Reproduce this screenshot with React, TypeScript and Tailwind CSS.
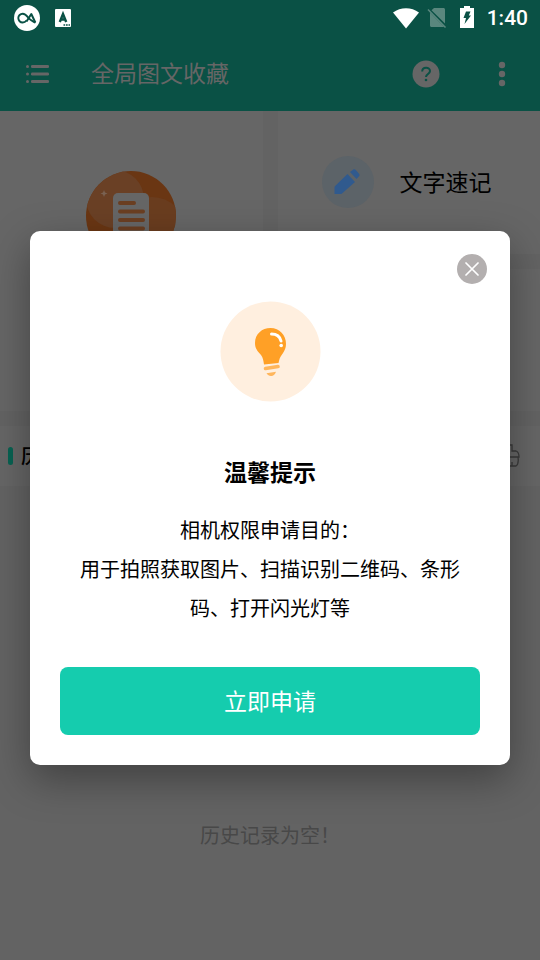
import type { ReactNode } from "react";

function StatusBar() {
  return (
    <div className="flex h-9 items-center justify-between pr-3 pl-3.5 text-white">
      <div className="flex items-center gap-3.5">
        <svg width="27" height="27" viewBox="0 0 27 27" aria-hidden="true">
          <circle cx="13" cy="13" r="13" fill="#fff" />
          <path
            d="M12.500 15.500c-1 1.300-2.300 2-3.800 2a4.400 4.400 0 1 1 0-8.800c3.300 0 4.800 3.300 7 5.500 1.300 1.300 3 2 5.800 3.500"
            fill="none"
            stroke="#0a5145"
            strokeWidth="1.900"
          />
          <path
            d="M12.500 16.500 17.300 9 21.300 17.500"
            fill="none"
            stroke="#0a5145"
            strokeWidth="2"
            strokeLinejoin="round"
          />
        </svg>
        <svg width="16" height="18" viewBox="0 0 16 18" aria-hidden="true">
          <rect width="16" height="18" rx="1" fill="#fff" />
          <path
            d="M4.800 13 8 5 11.200 13M5.800 10.500h4.400"
            fill="none"
            stroke="#0a5145"
            strokeWidth="2.400"
          />
          <path d="M8.500 16h6.500" stroke="#0a5145" strokeWidth="1.500" strokeDasharray="1.700 .8" />
        </svg>
      </div>
      <div className="flex items-center">
        <svg width="26" height="21" viewBox="0 0 26 21" aria-hidden="true">
          <path d="M0 4.500C7.500-1.200 18.500-1.200 26 4.500L13 20.500Z" fill="#fff" />
        </svg>
        <svg className="ml-2" width="20" height="20" viewBox="0 0 20 20" aria-hidden="true">
          <path
            d="M7 0h9.500c.8 0 1.500.7 1.500 1.500v14L4.500 2.200ZM3 4.500 17 18.800c-.3.100-.6.200-1 .200H4.500C3.700 19 3 18.300 3 17.500Z"
            fill="#5a877e"
          />
          <path d="M1 1.500 18.500 19.500" stroke="#5a877e" strokeWidth="1.500" />
        </svg>
        <svg className="ml-3 -mt-0.5" width="16" height="22" viewBox="0 0 16 22" aria-hidden="true">
          <path d="M5 0h6v2h4v20H1V2h4Z" fill="#fff" />
          <path d="M7 5.500h4.500L9.800 9.500H12L5.500 18 7 12H4.500Z" fill="#0a5145" />
        </svg>
        <span className="ml-3 font-[Roboto] text-[21px] leading-6 font-medium">1:40</span>
      </div>
    </div>
  );
}

function Toolbar() {
  return (
    <div className="flex h-[75px] items-center pr-8 pl-[26px] text-[#666]">
      <button aria-label="菜单">
        <svg width="24" height="20" viewBox="0 0 24 20" fill="currentColor" aria-hidden="true">
          <circle cx="1.500" cy="2.500" r="1.500" />
          <circle cx="1.500" cy="10" r="1.500" />
          <circle cx="1.500" cy="17.500" r="1.500" />
          <rect x="5" y="1" width="18" height="3" rx="1.200" />
          <rect x="5" y="8.500" width="18" height="3" rx="1.200" />
          <rect x="5" y="16" width="18" height="3" rx="1.200" />
        </svg>
      </button>
      <h1 className="ml-[41px] flex-1 pb-0.5 text-[23px]">全局图文收藏</h1>
      <button aria-label="帮助">
        <svg width="28" height="28" viewBox="0 0 28 28" aria-hidden="true">
          <circle cx="14" cy="14" r="13.500" fill="currentColor" />
          <path
            d="M10.200 11.500c0-5 7.800-5 7.800-.5 0 3-4 3-4 6"
            fill="none"
            stroke="#0a5145"
            strokeWidth="2"
          />
          <circle cx="14" cy="20" r="1.300" fill="#0a5145" />
        </svg>
      </button>
      <button className="ml-14" aria-label="更多">
        <svg width="12" height="26" viewBox="0 0 12 26" fill="currentColor" aria-hidden="true">
          <circle cx="6" cy="4" r="3.200" />
          <circle cx="6" cy="13" r="3.200" />
          <circle cx="6" cy="22" r="3.200" />
        </svg>
      </button>
    </div>
  );
}

function Card({ className, children }: { className?: string; children?: ReactNode }) {
  return <div className={`bg-[#666] ${className ?? ""}`}>{children}</div>;
}

function Shortcuts() {
  return (
    <div className="flex h-[300px] gap-[15px]">
      <Card className="flex flex-1 justify-center pt-[60px]">
        <svg width="90" height="90" viewBox="0 0 90 90" aria-hidden="true">
          <clipPath id="disc">
            <circle cx="45" cy="45" r="45" />
          </clipPath>
          <g clipPath="url(#disc)">
            <rect width="90" height="90" fill="#6a3613" />
            <circle cx="66" cy="60" r="34" fill="#6a3d1f" />
            <circle cx="29" cy="28" r="29" fill="#6a4025" />
          </g>
          <path d="m18 19 1 2.500 2.500 1-2.500 1-1 2.500-1-2.500-2.500-1 2.500-1Z" fill="#7a6252" />
          <rect x="27" y="22" width="36" height="46" rx="5" fill="#666" />
          <path
            d="M34 32h14M34 40.500h23M34 49h23M34 57.500h23"
            stroke="#6b3f22"
            strokeWidth="4"
            strokeLinecap="round"
          />
        </svg>
      </Card>
      <div className="flex flex-1 flex-col gap-[15px]">
        <Card className="flex flex-1 items-center pl-11">
          <svg width="52" height="52" viewBox="0 0 52 52" aria-hidden="true">
            <circle cx="26" cy="26" r="26" fill="#5c6368" />
            <g fill="#305a8e">
              <path d="m25.500 18 7.500 8-13 11.500c-.5.500-1 .5-1.500.5h-6v-6.500c0-.5.200-1 .6-1.400Z" />
              <path d="m28 16 3-2.200c1-.8 2-.6 2.800.2l3.200 3.800c.8 1 .7 2-.200 2.800l-2.300 2.400Z" />
            </g>
          </svg>
          <span className="ml-[26px] pb-0.5 text-[23px]">文字速记</span>
        </Card>
        <Card className="flex-1" />
      </div>
    </div>
  );
}

function HistoryHeader() {
  return (
    <div className="mt-[15px] flex h-[60px] items-center bg-[#666] pr-5 pl-2">
      <span className="h-[18px] w-[5px] rounded-sm bg-[#086252]" />
      <h2 className="ml-2 flex-1 text-[20px] font-medium">历史记录</h2>
      <button aria-label="清空">
        <svg
          width="24"
          height="24"
          viewBox="0 0 24 24"
          fill="none"
          stroke="#3a3a3a"
          strokeWidth="1.300"
          aria-hidden="true"
        >
          <path d="M9 1h7v6h4q3 1 3 6H1q0-5 3-6h5ZM3 13v9h17q3-2 2-9M9 22v-4M16 22v-4" />
        </svg>
      </button>
    </div>
  );
}

function BulbIcon() {
  return (
    <svg width="102" height="102" viewBox="0 0 102 102" aria-hidden="true">
      <circle cx="51.500" cy="51.500" r="50" fill="#ffefdf" />
      <path
        d="M51.500 28c9 0 15.500 7 15.500 16 0 8-5.500 10-7 17l-.5 2L45 64.500c-.6-4-1-7-3-9.500-3.500-4-6-6.500-6-12C36 34 43 28 51.500 28Z"
        fill="#ffa026"
      />
      <path d="M52.500 34c5.500 0 8.500 3 9.500 7" fill="none" stroke="#fff" strokeWidth="3" strokeLinecap="round" />
      <circle cx="62.200" cy="45.500" r="1.800" fill="#fff" />
      <path d="m46.500 68.500 12.500-2" stroke="#ffb65c" strokeWidth="3.600" strokeLinecap="round" />
      <path d="m47.500 73.200 9.500-1.500c-1 3-3 4-4.500 4.200-2 .3-3.500-.7-5-2.700Z" fill="#ffb65c" />
    </svg>
  );
}

function PermissionDialog() {
  return (
    <div
      role="dialog"
      aria-modal="true"
      aria-labelledby="dialog-title"
      className="relative flex w-full flex-col items-center rounded-[10px] bg-white px-[30px] pt-[69px] pb-[30px] shadow-[0_14px_40px_rgba(0,0,0,0.35)]"
    >
      <button
        aria-label="关闭"
        className="absolute top-[23px] right-[23px] flex size-[30px] items-center justify-center rounded-full bg-[#b3afaf]"
      >
        <svg width="14" height="14" viewBox="0 0 14 14" stroke="#fff" strokeWidth="1.700" aria-hidden="true">
          <path d="m1 1 12 12M13 1 1 13" strokeLinecap="round" />
        </svg>
      </button>
      <BulbIcon />
      <h2 id="dialog-title" className="mt-[52px] text-[23px] leading-[34px] font-bold">
        温馨提示
      </h2>
      <p className="mt-[22px] px-5 text-center text-[20px] leading-[39px]">
        相机权限申请目的：
        <br />
        用于拍照获取图片、扫描识别二维码、条形码、打开闪光灯等
      </p>
      <button className="mt-10 h-[68px] w-full rounded-lg bg-[#15ccae] pb-0.5 text-[23px] text-white">
        立即申请
      </button>
    </div>
  );
}

export default function App() {
  return (
    <div
      lang="zh-CN"
      className="relative flex min-h-screen flex-col bg-[#636363] font-['Noto_Sans_CJK_SC',sans-serif] text-black"
    >
      <header className="bg-[#0a5145]">
        <StatusBar />
        <Toolbar />
      </header>
      <main className="flex flex-1 flex-col">
        <Shortcuts />
        <HistoryHeader />
        <p className="mt-[334px] text-center text-[20px] leading-[30px] text-[#484848]">
          历史记录为空！
        </p>
      </main>
      <div className="absolute inset-0 flex items-center px-[30px] pt-9">
        <PermissionDialog />
      </div>
    </div>
  );
}
